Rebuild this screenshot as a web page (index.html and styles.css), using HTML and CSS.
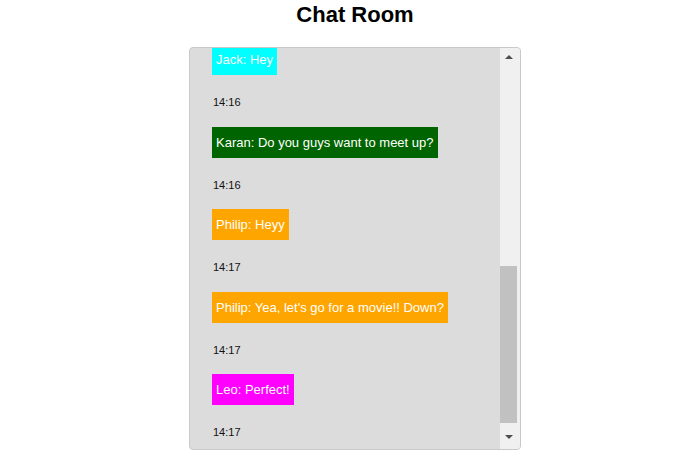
FILE: index.html
```html
<!DOCTYPE html>
<html lang="en">
<head>
<meta charset="utf-8">
<title>Chat Room</title>
<link rel="stylesheet" href="styles.css">
</head>
<body>
  <h1 class="title">Chat Room</h1>
  <div class="chatbox">
    <div class="messages" id="messages">
      <div class="message"><span class="bubble cyan">Jack: Hey</span><p class="time">14:16</p></div>
      <div class="message"><span class="bubble green">Karan: Do you guys want to meet up?</span><p class="time">14:16</p></div>
      <div class="message"><span class="bubble orange">Philip: Heyy</span><p class="time">14:17</p></div>
      <div class="message"><span class="bubble orange">Philip: Yea, let's go for a movie!! Down?</span><p class="time">14:17</p></div>
      <div class="message"><span class="bubble magenta">Leo: Perfect!</span><p class="time">14:17</p></div>
    </div>
    <div class="scrollbar" aria-hidden="true">
      <div class="sb-btn sb-up">
        <svg width="8" height="4" viewBox="0 0 8 4"><polygon points="0,4 4,0 8,4" fill="#4d4d4d"/></svg>
      </div>
      <div class="sb-track">
        <div class="sb-thumb" style="margin-top:201px;height:157px"></div>
      </div>
      <div class="sb-btn sb-down">
        <svg width="8" height="4" viewBox="0 0 8 4"><polygon points="0,0 8,0 4,4" fill="#4d4d4d"/></svg>
      </div>
    </div>
  </div>
  <script src="script.js"></script>
</body>
</html>
```

FILE: styles.css
```css
html, body {
  margin: 0;
  background: #ffffff;
}

body {
  padding: 2px 0 0 10px;
  font-family: "Liberation Sans", Arial, sans-serif;
  color: #000000;
}

.title {
  margin: 0;
  text-align: center;
  font-size: 22px;
  line-height: 26px;
  font-weight: bold;
}

.chatbox {
  box-sizing: border-box;
  width: 332px;
  height: 403px;
  margin: 19px auto 0;
  border: 1px solid #c9c9c9;
  border-radius: 4px;
  background: #dcdcdc;
  display: flex;
  overflow: hidden;
}

.messages {
  flex: 1;
  min-width: 0;
  overflow: hidden;
  padding: 0 0 0 22px;
  display: flex;
  flex-direction: column;
}

.message {
  display: flex;
  flex-direction: column;
  align-items: flex-start;
  flex: none;
}

.bubble {
  display: block;
  padding: 8px 4px;
  font-size: 13px;
  line-height: 15px;
  color: #ffffff;
}

.cyan { background: #00ffff; }
.green { background: #006400; }
.orange { background: #ffa500; }
.magenta { background: #ff00ff; }

.time {
  margin: 21px 0 17.5px 1px;
  font-size: 11px;
  line-height: 13px;
  color: #111111;
}

.scrollbar {
  width: 20px;
  flex: none;
  background: #f0f0f0;
  display: flex;
  flex-direction: column;
}

.sb-btn {
  height: 17px;
  flex: none;
  box-sizing: border-box;
  display: flex;
  justify-content: center;
  align-items: flex-start;
  padding-right: 2px;
}

.sb-btn svg {
  display: block;
}

.sb-up {
  padding-top: 7px;
}

.sb-down {
  padding-top: 3px;
}

.sb-track {
  flex: 1;
  display: flex;
  flex-direction: column;
}

.sb-thumb {
  width: 17px;
  background: #c1c1c1;
}
```

FILE: script.js
```js
document.getElementById('messages').scrollTop = 4;
```
